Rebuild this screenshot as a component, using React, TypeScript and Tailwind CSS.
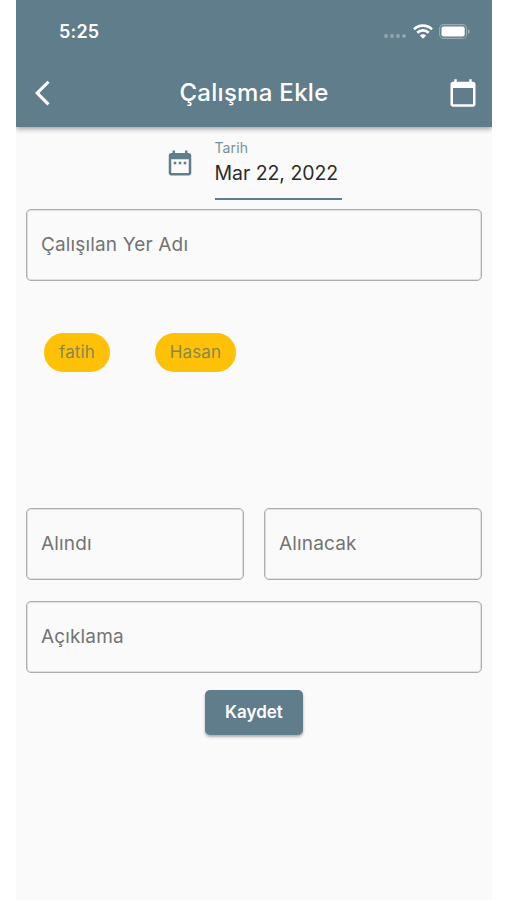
import type { ReactNode } from "react";

function StatusBar() {
    return (
        <div className="flex h-[62px] items-center justify-between pl-[43px] pr-[21px]">
            <span className="pt-[1px] text-[18px] leading-6 font-semibold tracking-[0.2px]">5:25</span>
            <div className="flex items-center">
                <div className="mt-2.5 mr-[7px] flex gap-[2px] opacity-30">
                    <span className="h-1 w-1 rounded-full bg-white"/>
                    <span className="h-1 w-1 rounded-full bg-white"/>
                    <span className="h-1 w-1 rounded-full bg-white"/>
                    <span className="h-1 w-1 rounded-full bg-white"/>
                </div>
                <svg width="20" height="15" viewBox="0 0 20 15" className="mr-[6px]" fill="none" stroke="white" strokeWidth="2.7">
                    <path d="M1 5.4a12.8 12.8 0 0 1 18 0"/>
                    <path d="M4.3 8.8a8.1 8.1 0 0 1 11.4 0"/>
                    <path d="M10 14.7 6.9 11.5a4.4 4.4 0 0 1 6.2 0z" fill="white" stroke="none"/>
                </svg>
                <svg width="32" height="15" viewBox="0 0 32 15">
                    <rect x="0.6" y="0.6" width="27" height="13.8" rx="4" fill="none" stroke="white" strokeOpacity="0.35" strokeWidth="1.1"/>
                    <rect x="2.5" y="2.4" width="23.2" height="10.2" rx="2" fill="white"/>
                    <path d="M29.2 5.2c1.8.7 1.8 3.9 0 4.6z" fill="white" fillOpacity="0.5"/>
                </svg>
            </div>
        </div>
    )
}

function AppBar() {
    return (
        <header className="relative h-[127px] shrink-0 bg-[#607d8b] text-white shadow-[0_2px_5px_rgba(0,0,0,0.36)]">
            <StatusBar/>
            <div className="flex h-[62px] items-center justify-between pl-[19px] pr-[14px]">
                <button aria-label="Geri">
                    <svg width="30" height="30" viewBox="0 0 24 24" fill="currentColor">
                        <path d="M11.67 3.87L9.9 2.1 0 12l9.9 9.9 1.77-1.77L3.54 12z"/>
                    </svg>
                </button>
                <h1 className="mr-[5px] text-[24px] font-medium tracking-[0.3px]">Çalışma Ekle</h1>
                <button aria-label="Takvim">
                    <svg width="30" height="30" viewBox="0 0 24 24" fill="currentColor">
                        <path d="M20 3h-1V1h-2v2H7V1H5v2H4c-1.1 0-2 .9-2 2v16c0 1.1.9 2 2 2h16c1.1 0 2-.9 2-2V5c0-1.1-.9-2-2-2zm0 18H4V8h16v13z"/>
                    </svg>
                </button>
            </div>
        </header>
    )
}

function DateField() {
    return (
        <div className="flex h-[82px] justify-center pr-[2px]">
            <svg width="30" height="30" viewBox="0 0 24 24" fill="#607d8b" className="mt-[21px] mr-[20px]">
                <path d="M9 11H7v2h2v-2zm4 0h-2v2h2v-2zm4 0h-2v2h2v-2zm2-7h-1V2h-2v2H8V2H6v2H5c-1.11 0-1.99.9-1.99 2L3 20c0 1.1.89 2 2 2h14c1.1 0 2-.9 2-2V6c0-1.1-.9-2-2-2zm0 16H5V9h14v11z"/>
            </svg>
            <div className="mt-3 flex h-[61px] w-[127px] flex-col border-b-2 border-[#607d8b] whitespace-nowrap">
                <span className="text-[14px] leading-[18px] tracking-[0.1px] text-[#75909c]">Tarih</span>
                <span className="text-[19.5px] leading-[32px] tracking-[-0.05px] text-[#2b2b2b]">Mar 22, 2022</span>
            </div>
        </div>
    )
}

function Field({ label }: { label: string }) {
    return (
        <div className="flex h-[72px] flex-1 items-center rounded-[5px] border border-[#adadad] px-[14px] inset-ring inset-ring-black/10">
            <span className="text-[19px] tracking-[0.15px] text-[#737373]">{label}</span>
        </div>
    )
}

function Chip({ children }: { children: ReactNode }) {
    return (
        <button className="flex h-[39px] items-center rounded-full bg-[#ffc107] px-[15px] pt-[1px] text-[17px] tracking-[0.1px] text-[#86894b]">{children}</button>
    )
}

export default function App() {
    return (
        <div className="flex h-[900px] w-[507px] justify-center bg-white pl-[1px] font-['Inter','Liberation_Sans',sans-serif]">
            <div className="flex w-[476px] flex-col overflow-hidden bg-[#fafafa]">
                <AppBar/>
                <main className="flex flex-col px-[10px]">
                    <DateField/>
                    <div className="flex">
                        <Field label="Çalışılan Yer Adı"/>
                    </div>
                    <div className="flex h-[227px] items-start gap-[45px] pt-[52px] pl-[18px]">
                        <Chip>fatih</Chip>
                        <Chip>Hasan</Chip>
                    </div>
                    <div className="flex gap-5">
                        <Field label="Alındı"/>
                        <Field label="Alınacak"/>
                    </div>
                    <div className="mt-[21px] flex">
                        <Field label="Açıklama"/>
                    </div>
                    <button className="mt-[17px] h-[45px] w-[98px] self-center rounded-[5px] bg-[#607d8b] text-[17px] font-semibold text-white shadow-[0_2px_3px_rgba(0,0,0,0.3)]">Kaydet</button>
                </main>
            </div>
        </div>
    )
}
